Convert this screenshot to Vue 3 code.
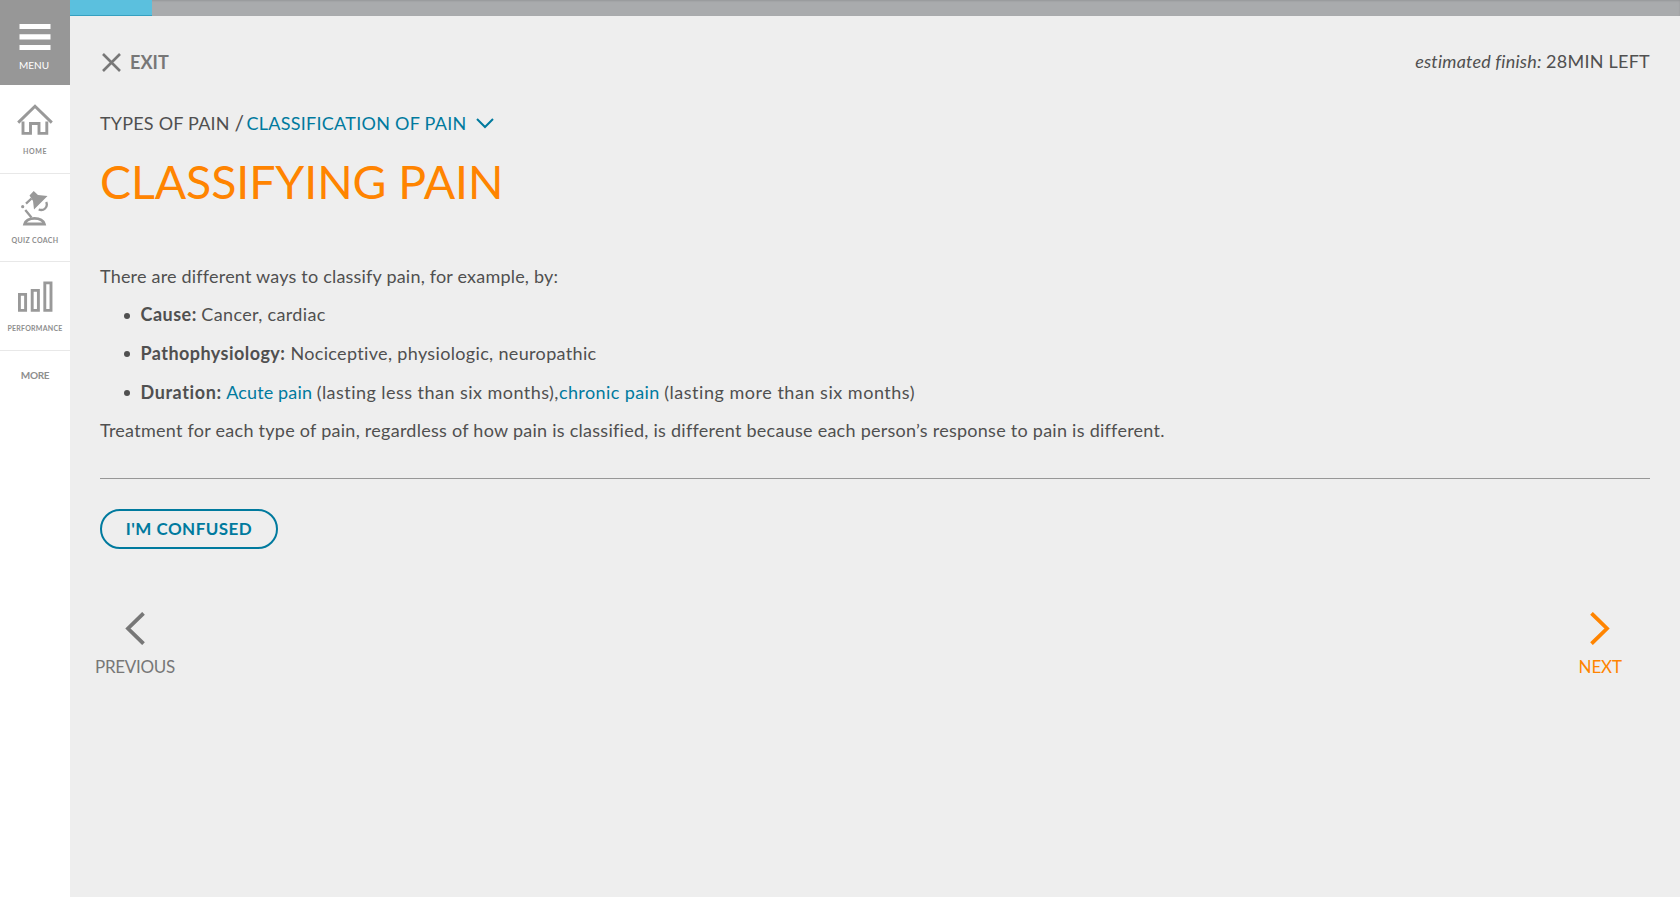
<script setup>
const progress = 5.1
</script>

<template>
  <div class="app">
    <aside class="sidebar">
      <button class="menu">
        <svg width="32" height="26" viewBox="0 0 32 26" fill="#fff">
          <path d="M.5 0h31v5H.5zM.5 10.300h31v5.200H.5zM.5 21h31v5H.5z" />
        </svg>
        <span>MENU</span>
      </button>
      <a class="item home">
        <svg width="36" height="32" viewBox="0 0 36 32" fill="none" stroke="#999" stroke-width="2.900">
          <path d="M1.200 18.600 18 2.200l16.800 16.400" />
          <path d="M6 17.500V29.400h7.500V19.500h8.500v9.900h7.800V17.500" />
        </svg>
        <span>HOME</span>
      </a>
      <a class="item quiz">
        <svg width="28" height="35" viewBox="0 0 28 35" fill="none" stroke="#999" stroke-width="2.300">
          <path d="M12.700 0 17 4l9.500 1L13 18.500 12 10 8.500 4.500z" fill="#999" stroke="none" />
          <path d="M10.500 7.500 5 12.700M4.300 19l6.200 7.500" />
          <circle cx="1.700" cy="15.700" r="1.600" fill="#999" stroke="none" />
          <path d="M25.200 11c2.300 5.500-2.700 9.300-7.500 7.500" />
          <path d="M3.700 33h19.600C21 25.500 6 25.500 3.700 33z" stroke-width="2.800" />
        </svg>
        <span>QUIZ COACH</span>
      </a>
      <a class="item perf">
        <svg width="35" height="31" viewBox="0 0 35 31" fill="none" stroke="#999" stroke-width="2.900">
          <path d="M1.400 13.400h6.200v16H1.400zM14.200 9.400h6.200v20h-6.200zM26.800 1.900H33v27.500h-6.200z" />
        </svg>
        <span>PERFORMANCE</span>
      </a>
      <a class="more">MORE</a>
    </aside>

    <main class="main">
      <div class="progress"><div class="bar" :style="{ width: progress + '%' }"></div></div>
      <div class="content">
        <header class="head">
          <a class="exit">
            <svg width="19" height="19" viewBox="0 0 19 19" fill="none" stroke="#777" stroke-width="2.600">
              <path d="m1 1 17 17M18 1 1 18" />
            </svg>
            <span>EXIT</span>
          </a>
          <p class="estimate"><em>estimated finish:</em><span>28MIN LEFT</span></p>
        </header>

        <nav class="crumbs">
          <span>TYPES OF PAIN</span>
          <i>/</i>
          <a>CLASSIFICATION OF PAIN</a>
          <svg width="18" height="11" viewBox="0 0 18 11" fill="none" stroke="#007a9e" stroke-width="2">
            <path d="m1 1 8 8 8-8" />
          </svg>
        </nav>

        <h1>CLASSIFYING PAIN</h1>

        <p class="intro">There are different ways to classify pain, for example, by:</p>
        <ul>
          <li class="cause"><strong>Cause:</strong><span>Cancer, cardiac</span></li>
          <li class="patho"><strong>Pathophysiology:</strong><span>Nociceptive, physiologic, neuropathic</span></li>
          <li class="duration">
            <strong>Duration:</strong><a class="acute">Acute pain</a><span class="less">(lasting less than six months),</span><a class="chronic">chronic pain</a><span class="longer">(lasting more than six months)</span>
          </li>
        </ul>
        <p class="treatment">Treatment for each type of pain, regardless of how pain is classified, is different because each person’s response to pain is different.</p>

        <hr />
        <button class="confused">I'M CONFUSED</button>

        <nav class="pager">
          <a class="prev">
            <svg width="20" height="33" viewBox="0 0 20 33" fill="none" stroke="currentColor" stroke-width="3.800">
              <path d="M18.500 1.300 3 16.500 18.500 31.700" />
            </svg>
            <span>PREVIOUS</span>
          </a>
          <a class="next">
            <svg width="20" height="33" viewBox="0 0 20 33" fill="none" stroke="currentColor" stroke-width="3.800">
              <path d="M1.500 1.300 17 16.500 1.500 31.700" />
            </svg>
            <span>NEXT</span>
          </a>
        </nav>
      </div>
    </main>
  </div>
</template>

<style>
body { background: #eee; }
</style>

<style scoped>
.app {
  display: flex;
  height: 897px;
  overflow: hidden;
  background: #eee;
  color: #505050;
  font: 18px/30px Lato, "Open Sans", sans-serif;
  box-sizing: border-box;
}
.app * { box-sizing: border-box; }
p, h1, ul { margin: 0; padding: 0; }
button { border: 0; padding: 0; background: none; font: inherit; }
svg { display: block; flex: none; }
a { color: #007a9e; }

.sidebar { width: 70px; flex: none; background: #fff; }
.sidebar a { color: #8e8e8e; }
.menu {
  width: 70px; height: 85px; padding-top: 24px;
  display: flex; flex-direction: column; align-items: center;
  background: #979797; color: #fff;
  font-size: 10px; line-height: 12px;
}
.menu svg { margin-right: 1px; }
.menu span { margin: 9px 2px 0 0; }
.item {
  height: 88px; display: flex; flex-direction: column; align-items: center;
  border-bottom: 1px solid #e8e8e8;
  font-weight: 700; font-size: 7px; line-height: 8px;
}
.home, .perf { height: 89px; }
.item span { margin-top: auto; white-space: nowrap; }
.home { padding: 19px 0 18px; }
.home span { letter-spacing: .6px; }
.quiz { padding: 17px 0 17px; }
.quiz span { letter-spacing: .35px; }
.perf { padding: 19px 0 18px; }
.perf span { letter-spacing: .25px; }
.more {
  display: block; padding-top: 18px; text-align: center;
  font-weight: 700; font-size: 10px; line-height: 12px; letter-spacing: -.35px;
}

.main { flex: 1; min-width: 0; }
.progress {
  height: 16px; background: #a9abad;
  box-shadow: inset 0 1px 2px rgba(0, 0, 0, .12);
}
.bar { height: 16px; background: #5bc0de; border-bottom: 1px solid #35a0c0; }
.content { padding: 31px 30px 0; }

.head { display: flex; justify-content: space-between; height: 30px; }
.exit {
  display: flex; align-items: center; gap: 9px; padding-left: 2px;
  color: #777; font-weight: 700; letter-spacing: .1px;
}
.estimate { display: flex; gap: 4.5px; margin-top: -1px; }
.estimate em { letter-spacing: .2px; }
.estimate span { letter-spacing: .25px; }

.crumbs { display: flex; align-items: center; height: 30px; margin-top: 31px; white-space: nowrap; }
.crumbs span { letter-spacing: .2px; width: 134.5px; }
.crumbs i { width: 12px; font-size: 21px; font-style: normal; }
.crumbs a { letter-spacing: .26px; }
.crumbs svg { margin-left: 9px; }

h1 { margin-top: 13px; font-weight: 400; font-size: 46.5px; line-height: 60px; letter-spacing: -.12px; color: #ff8400; }

.intro { margin-top: 46px; line-height: 38px; letter-spacing: .2px; }
ul { list-style: none; }
li { display: flex; height: 39px; padding-left: 24px; line-height: 40px; white-space: nowrap; }
li::before {
  content: ""; flex: none; width: 6px; height: 6px; margin: 18px 10.5px 0 0;
  border-radius: 50%; background: #505050;
}
.cause { height: 38px; line-height: 38px; }
strong { letter-spacing: .45px; margin-right: 5px; }
.cause strong { letter-spacing: .5px; margin-right: 4.5px; }
.cause span { letter-spacing: .34px; }
.patho span { letter-spacing: .34px; }
.duration strong { margin-right: 4.5px; letter-spacing: .6px; }
.acute { letter-spacing: .15px; margin-right: 4.5px; }
.less { letter-spacing: .46px; }
.chronic { letter-spacing: .4px; margin-right: 4.5px; }
.longer { letter-spacing: .52px; }
.treatment { line-height: 38px; letter-spacing: .262px; white-space: nowrap; }

hr { height: 1px; margin: 29px 0 0; border: 0; background: #979797; }
.confused {
  display: block; width: 178px; height: 40px; margin-top: 30px; padding-bottom: 1px;
  border: 2px solid #007a9e; border-radius: 20px; color: #007a9e;
  font-weight: 700; font-size: 17px; line-height: 35px; letter-spacing: .45px;
}

.pager { display: flex; justify-content: space-between; margin-top: 63px; padding-right: 28px; font-size: 17px; line-height: 20px; }
.pager a { display: flex; flex-direction: column; align-items: center; gap: 12px; }
.pager .prev { color: #777; margin-left: -5px; letter-spacing: -.28px; }
.pager .next { color: #ff8400; letter-spacing: -.1px; }
</style>
